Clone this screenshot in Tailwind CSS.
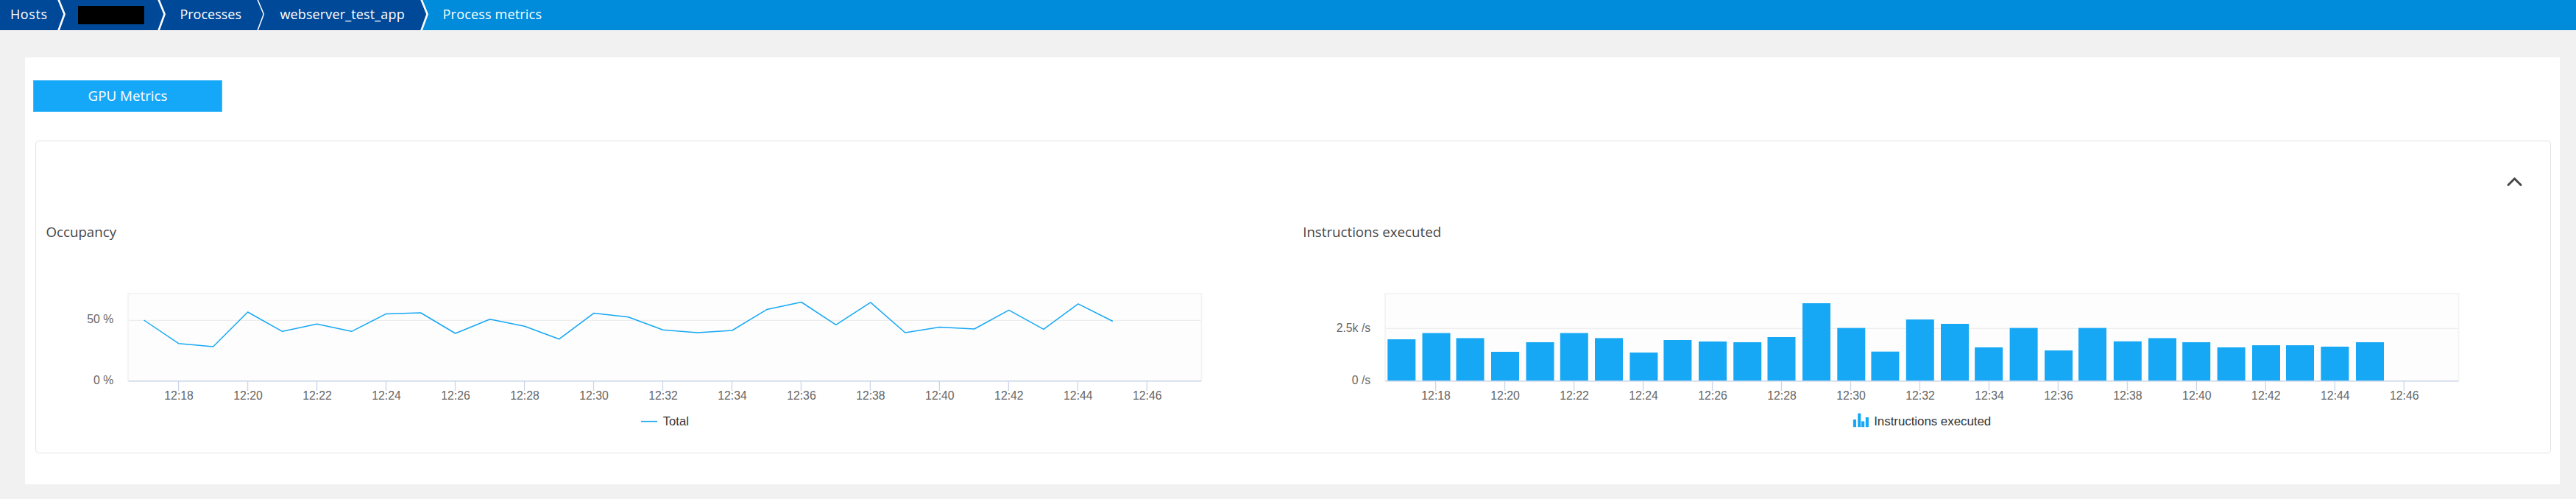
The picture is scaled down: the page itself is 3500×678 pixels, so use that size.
<!DOCTYPE html>
<html lang="en">
<head>
<meta charset="utf-8">
<title>Process metrics</title>
<script src="https://cdn.jsdelivr.net/npm/@tailwindcss/browser@4"></script>
</head>
<body class="h-[678px] w-[3500px] overflow-hidden bg-[#f1f1f1] font-['Open_Sans','Noto_Sans',sans-serif] text-[#454646]">
<header class="flex h-[41px] bg-[#008cdb] text-[18px] leading-[39px] whitespace-nowrap text-white">
  <div class="w-[78px] bg-[#004999] pl-[14px] tracking-[0.6px]">Hosts</div>
  <svg class="h-[41px] w-3 shrink-0 bg-[#004999]" viewBox="0 0 12 41"><path d="M1.3 -1L9.6 19.3L1.3 42" fill="none" stroke="#fff" stroke-width="2.6"/></svg>
  <div class="w-[124px] bg-[#004999] pt-2 pl-4"><div class="h-[25px] w-[90px] bg-black"></div></div>
  <svg class="h-[41px] w-3 shrink-0 bg-[#004999]" viewBox="0 0 12 41"><path d="M1.3 -1L9.6 19.3L1.3 42" fill="none" stroke="#fff" stroke-width="2.6"/></svg>
  <div class="w-[123px] bg-[#004999] pl-[18.4px]">Processes</div>
  <svg class="h-[41px] w-3 shrink-0 bg-[#004999]" viewBox="0 0 12 41"><path d="M.8 -1L9.3 19.3L.8 42" fill="none" stroke="#fff" stroke-width="1.5"/></svg>
  <div class="w-[210px] bg-[#004999] pl-[19.4px] tracking-[0.14px]">webserver_test_app</div>
  <svg class="h-[41px] w-3 shrink-0" viewBox="0 0 12 41"><path d="M0 0H1.3L9.6 19.3L1.3 41H0z" fill="#004999"/><path d="M1.3 -1L9.6 19.3L1.3 42" fill="none" stroke="#fff" stroke-width="2.6"/></svg>
  <div class="pl-[18.6px] tracking-[0.18px]">Process metrics</div>
</header>

<main class="mt-[37px] ml-[34px] h-[580px] w-[3444px] bg-white pt-[31px]">
  <button class="ml-[11px] flex h-[43px] w-[257px] items-center justify-center border border-[#45b9f8] bg-[#16a8f8] pb-px text-[18.8px] text-white">GPU Metrics</button>

  <section class="mt-[39px] ml-[14px] h-[425px] w-[3418px] rounded-[5px] border border-[#e0e4e4]">
    <div class="flex h-[101px] justify-end pt-[42px] pr-[34px]">
      <svg class="size-8" viewBox="0 0 32 32"><path d="M9 17.2L17.5 8.7L26 17.2" fill="none" stroke="#454646" stroke-width="3" stroke-linecap="round" stroke-linejoin="round"/></svg>
    </div>
    <div class="grid grid-cols-[1708px_1708px]">
      <div>
        <h2 class="h-[87px] pt-2 pl-[13.5px] text-[18.7px] leading-[28px]">Occupancy</h2>
        <svg id="occupancy" class="block h-[220px] w-[1708px] font-['Liberation_Sans',sans-serif]" viewBox="49 380 1708 220"></svg>
      </div>
      <div>
        <h2 class="h-[87px] pt-2 pl-[13.2px] text-[18.7px] leading-[28px]">Instructions executed</h2>
        <svg id="instructions" class="block h-[220px] w-[1708px] font-['Liberation_Sans',sans-serif]" viewBox="49 380 1708 220"></svg>
      </div>
    </div>
  </section>
</main>

<script>
const AXIS = '#ccd6eb', SERIES = '#16a8f5';
const label = (x, y, t, anchor) => `<text x="${x}" y="${y}" text-anchor="${anchor}" font-size="15.8" fill="#666">${t}</text>`;

function frame(gridY, series, yLabels) {
  let s = `<rect x="174" y="399" width="1458.5" height="119" fill="#fdfdfd" stroke="#f3f3f3" stroke-width="1.8"/>`;
  s += `<path d="M175 ${gridY}H1631.5" stroke="#ededed" stroke-width="1.2"/>` + series;
  s += `<path d="M174.5 517.8H1632" stroke="${AXIS}" stroke-width="1.4"/>`;
  for (let i = 0; i < 15; i++) {
    const x = 242.6 + 93.98 * i;
    s += `<path d="M${x} 518V531" stroke="${AXIS}" stroke-width="1.35"/>` + label(x + 0.5, 543, '12:' + (18 + 2 * i), 'middle');
  }
  for (const [y, t] of yLabels) s += label(154.2, y, t, 'end');
  return s;
}

const occ = [435,466.7,471,424,450.3,440.3,450.3,426.4,425,453,433.7,443.3,460.7,425.6,430.7,448.3,452,449,420.6,410.5,441.3,410.9,452,444.5,447,421.3,447.3,412.9,436.5];
const line = `<polyline points="${occ.map((y, i) => (195.6 + 47.01 * i).toFixed(1) + ',' + y).join(' ')}" fill="none" stroke="${SERIES}" stroke-width="1.5" stroke-linejoin="round"/>`;
document.getElementById('occupancy').innerHTML =
  frame(435.4, line, [[439, '50 %'], [521.8, '0 %']]) +
  `<path d="M871 572.6H893" stroke="${SERIES}" stroke-width="1.5"/><text x="900.8" y="578.4" font-size="16.6" fill="#333">Total</text>`;

// [left, top] of each bar
const bars = [[1885.3,461],[1932.5,452.5],[1978.5,459.4],[2026,478],[2073.5,465],[2119.8,452.5],[2167,459.4],[2214.4,479],[2260.4,462],[2308,464],[2355.2,465],[2401.5,458],[2449,412],[2496.3,445.6],[2542.4,477.7],[2589.8,434.1],[2637,440],[2683.1,472],[2730.6,445.6],[2778,476.2],[2824,445.6],[2871.8,463.8],[2919,459.4],[2965.2,465],[3012.6,472],[3060,469.1],[3106,469.1],[3153.4,471],[3201,465]];
const columns = bars.map(([x, y]) => `<rect x="${(x - 1708).toFixed(1)}" y="${y}" width="38" height="${(517.5 - y).toFixed(1)}" fill="${SERIES}"/>`).join('');
document.getElementById('instructions').innerHTML =
  frame(446.4, columns, [[451.4, '2.5k /s'], [522, '0 /s']]) +
  [[809.9,570],[816.2,561.6],[821.1,572.4],[826.8,567]].map(([x, y]) => `<rect x="${x}" y="${y}" width="4.1" height="${580.2 - y}" fill="${SERIES}"/>`).join('') +
  `<text x="838.2" y="578.4" font-size="16.9" textLength="159" fill="#333">Instructions executed</text>`;
</script>
</body>
</html>
